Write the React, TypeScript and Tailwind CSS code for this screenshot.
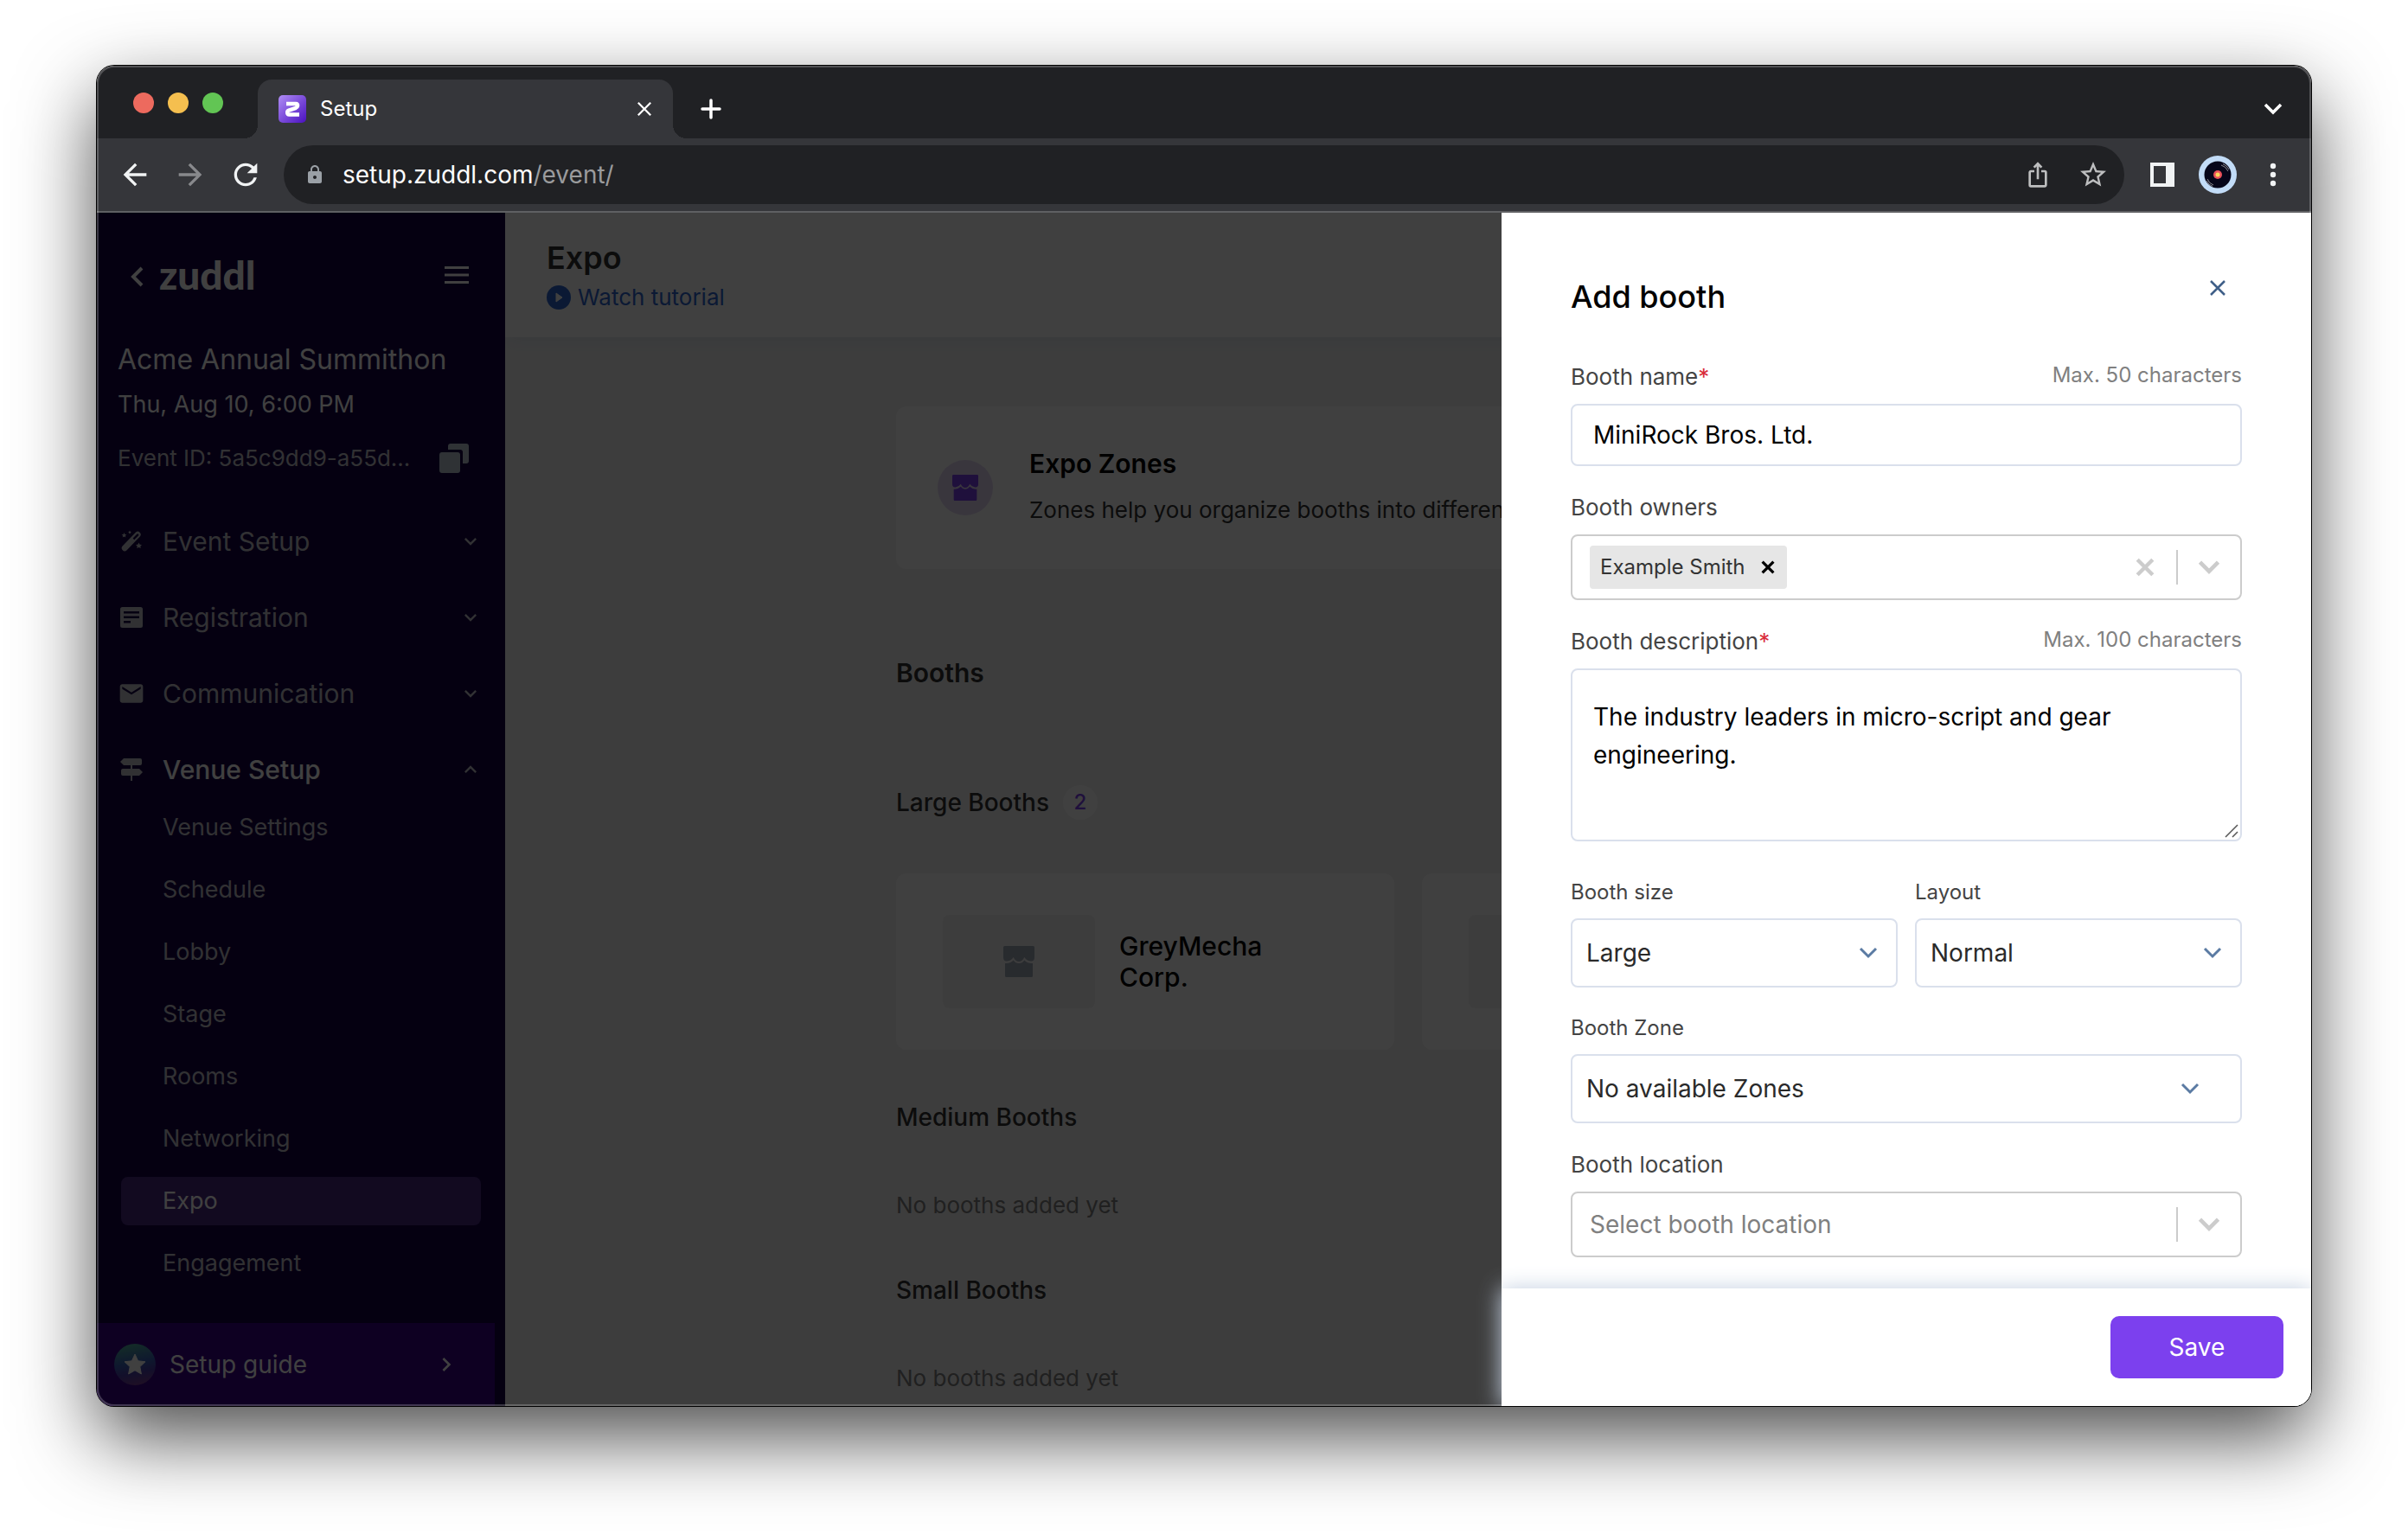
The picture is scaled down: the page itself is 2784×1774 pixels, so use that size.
import React from "react";
import {
  MdArrowBack,
  MdArrowForward,
  MdEmail,
  MdIosShare,
  MdKeyboardArrowDown,
  MdKeyboardArrowRight,
  MdKeyboardArrowUp,
  MdLock,
  MdRefresh,
  MdStarBorder,
} from "react-icons/md";

const venueLinks = ["Venue Settings", "Schedule", "Lobby", "Stage", "Rooms", "Networking", "Expo", "Engagement"];

function WandIcon() {
  return (
    <svg viewBox="0 0 26 26" className="size-[26px]" fill="currentColor" aria-hidden="true">
      <path
        fillRule="evenodd"
        d="M18 2.6a3.4 3.4 0 0 1 4.8 4.8L7.4 23.4a3.4 3.4 0 0 1-4.8-4.8L18 2.6Zm1.2 2.2-4.6 4.8 1.6 1.6 4.8-4.6a1.2 1.2 0 0 0-1.8-1.8Z"
      />
      <path d="m4.5 3 .9 1.9 2 .3-1.5 1.4.4 2-1.8-1-1.8 1 .4-2-1.5-1.4 2-.3L4.5 3ZM11 .5l.6 1.3 1.3.2-1 .9.3 1.3L11 3.6l-1.2.6.3-1.3-1-.9 1.3-.2L11 .5ZM21.500 14.500l1.100 2.200 2.400.3-1.700 1.700.4 2.400-2.200-1.200-2.200 1.200.4-2.400-1.700-1.700 2.400-.3 1.100-2.200Z" />
    </svg>
  );
}

function FormIcon() {
  return (
    <svg viewBox="0 0 26 24" className="w-[26px] h-6" fill="currentColor" aria-hidden="true">
      <path
        fillRule="evenodd"
        d="M2.500 0h21A2.500 2.500 0 0 1 26 2.500v19a2.500 2.500 0 0 1-2.500 2.500h-21A2.500 2.500 0 0 1 0 21.500v-19A2.500 2.500 0 0 1 2.500 0ZM4 5v2.500h18V5H4Zm0 5.500V13h18v-2.500H4ZM4 16v2.500h8V16H4Z"
      />
    </svg>
  );
}

function SignpostIcon() {
  return (
    <svg viewBox="0 0 26 26" className="size-[26px]" fill="currentColor" aria-hidden="true">
      <path d="M4 0h19a2 2 0 0 1 2 2v4a2 2 0 0 1-2 2H4L0 4l4-4ZM3 12h19l4 4-4 4H3a2 2 0 0 1-2-2v-4a2 2 0 0 1 2-2ZM12 8h2v4h-2zM12 20h2v6h-2z" />
    </svg>
  );
}

function StoreIcon({ className }: { className: string }) {
  return (
    <svg viewBox="0 0 36 36" className={className} fill="currentColor" aria-hidden="true">
      <path d="M0 1.500Q0 0 1.500 0h33Q36 0 36 1.500V13q0 5-4.500 4.500Q27 17 24.300 13 22 18 18 18t-6.300-5Q9 17 4.500 17.500 0 18 0 13Z" />
      <path d="M2 20q6 .5 9.700-3.500Q14 20 18 20t6.300-3.500Q28 20.500 34 20v14.500q0 1.500-1.500 1.500h-29Q2 36 2 34.500Z" />
    </svg>
  );
}

function Chevron({ className }: { className: string }) {
  return (
    <svg viewBox="0 0 24 24" className={className} fill="none" stroke="currentColor" aria-hidden="true">
      <path d="m3 7 9 9 9-9" />
    </svg>
  );
}

function Cross({ className }: { className: string }) {
  return (
    <svg viewBox="0 0 20 20" className={className} fill="none" stroke="currentColor" aria-hidden="true">
      <path d="m2 2 16 16M18 2 2 18" />
    </svg>
  );
}

function BrowserBar() {
  return (
    <header className="text-white">
      <div className="flex h-[84px] items-end bg-[#202124]">
        <div className="mb-[29px] ml-[42px] flex gap-4">
          <span className="size-6 rounded-full bg-[#ed6a5e]" />
          <span className="size-6 rounded-full bg-[#f5bf4f]" />
          <span className="size-6 rounded-full bg-[#62c554]" />
        </div>
        <div className="ml-6 size-4 bg-[radial-gradient(circle_at_0_0,#202124_16px,#35363a_16px)]" />
        <div className="flex h-[68px] w-[480px] items-center rounded-t-2xl bg-[#35363a] px-6">
          <svg viewBox="0 0 32 32" className="size-8" aria-hidden="true">
            <defs>
              <linearGradient id="mark" x1="0" y1="0" x2="1" y2="1">
                <stop offset="0" stopColor="#b08df5" />
                <stop offset="1" stopColor="#4a10c0" />
              </linearGradient>
            </defs>
            <rect width="32" height="32" rx="5" fill="url(#mark)" />
            <path d="M9 10h11q2.500 0 2 2.500-.3 1.500-2 2.300l-8 2.700q-1.800.8-1.800 2.500 0 2.500 2.300 2.500H24" fill="none" stroke="#fff" strokeWidth="4.500" />
          </svg>
          <span className="ml-4 flex-1 text-[24px] leading-8">Setup</span>
          <button aria-label="Close tab">
            <Cross className="size-[18px] stroke-[2.500]" />
          </button>
        </div>
        <div className="size-4 bg-[radial-gradient(circle_at_100%_0,#202124_16px,#35363a_16px)]" />
        <button aria-label="New tab" className="mb-[22px] ml-4">
          <svg viewBox="0 0 24 24" className="size-6" stroke="#fff" strokeWidth="3.500" strokeLinecap="round">
            <path d="M12 2v20M2 12h20" />
          </svg>
        </button>
        <button aria-label="Search tabs" className="mr-8 mb-[22px] ml-auto">
          <Chevron className="size-6 stroke-[3.500]" />
        </button>
      </div>

      <div className="flex h-[86px] items-center border-b-2 border-[#5f6063] bg-[#35363a] pr-8 pl-6">
        <div className="flex w-48 gap-6 text-[#f1f3f4]">
          <button aria-label="Back">
            <MdArrowBack className="size-10" />
          </button>
          <button aria-label="Forward" className="text-[#88898c]">
            <MdArrowForward className="size-10" />
          </button>
          <button aria-label="Reload">
            <MdRefresh className="size-10" />
          </button>
        </div>
        <div className="flex h-[68px] flex-1 items-center rounded-full bg-[#202124] pr-[18px] pl-6">
          <MdLock className="size-6 text-[#9aa0a6]" />
          <div role="textbox" aria-label="Address" className="ml-5 flex-1 text-[28px] leading-9">
            setup.zuddl.com<span className="text-[#9a9b9d]">/event/</span>
          </div>
          <div className="flex gap-7 text-[#bdbebf]">
            <button aria-label="Share">
              <MdIosShare className="size-9 p-[2px]" />
            </button>
            <button aria-label="Bookmark">
              <MdStarBorder className="size-9" />
            </button>
          </div>
        </div>
        <button aria-label="Side panel" className="ml-[30px]">
          <svg viewBox="0 0 28 28" className="size-7">
            <path fill="#f1f3f4" fillRule="evenodd" d="M0 0h28v28H0zM4 4v20h14V4z" />
          </svg>
        </button>
        <button aria-label="Profile" className="ml-7">
          <svg viewBox="0 0 44 44" className="size-11">
            <circle cx="22" cy="22" r="22" fill="#c2dcf7" />
            <circle cx="22" cy="22" r="15.500" fill="#06061a" />
            <path d="M26 11a12 12 0 0 1 8 7M28 9.500a13 13 0 0 1 7 6.500M10 27a12 12 0 0 0 7 7M9 29a13 13 0 0 0 7 6.500" stroke="#8b8b90" fill="none" />
            <circle cx="22" cy="22" r="5" fill="#e8505b" />
            <circle cx="22" cy="22" r="2.500" fill="#f9d65c" />
          </svg>
        </button>
        <button aria-label="Menu" className="ml-[30px]">
          <svg viewBox="0 0 24 28" className="h-7 w-6" fill="#f1f3f4">
            <circle cx="12" cy="4" r="3.200" />
            <circle cx="12" cy="14" r="3.200" />
            <circle cx="12" cy="24" r="3.200" />
          </svg>
        </button>
      </div>
    </header>
  );
}

function NavGroup({ icon, label, open }: { icon: React.ReactNode; label: string; open?: boolean }) {
  return (
    <button className="flex h-14 w-full items-center pr-[26px] pl-[27px] text-left text-[#c4c4cc]">
      <span className="flex w-[26px] justify-center">{icon}</span>
      <span className={open ? "ml-[23px] flex-1 text-[30px] leading-9 font-medium text-white" : "ml-[23px] flex-1 text-[30px] leading-9"}>{label}</span>
      {open ? <MdKeyboardArrowUp className="size-7" /> : <MdKeyboardArrowDown className="size-7" />}
    </button>
  );
}

function Sidebar() {
  return (
    <aside className="flex w-[472px] shrink-0 flex-col bg-[#140044] pt-11 text-white">
      <div className="flex h-14 items-center pr-[42px] pl-[38px]">
        <a href="#" className="flex items-center" aria-label="zuddl, back to events">
          <svg viewBox="0 0 16 24" className="mt-1 h-6 w-4" fill="none" stroke="#fff" strokeWidth="4">
            <path d="M14 2 4 12l10 10" />
          </svg>
          <span className="ml-[18px] font-[Lato] text-[46px] leading-[52px] font-black">zuddl</span>
        </a>
        <button aria-label="Collapse menu" className="ml-auto">
          <svg viewBox="0 0 28 20" className="h-5 w-7" fill="#fff">
            <path d="M0 0h28v3H0zM0 8.500h28v3H0zM0 17h28v3H0z" />
          </svg>
        </button>
      </div>

      <div className="mt-[50px] pr-[42px] pl-6">
        <h2 className="text-[32px] leading-10">Acme Annual Summithon</h2>
        <p className="mt-[14px] text-[27px] leading-9">Thu, Aug 10, 6:00 PM</p>
        <div className="mt-[26px] flex items-center justify-between text-[26px] leading-9 text-[#c4c4cc]">
          <p>Event ID: 5a5c9dd9-a55d...</p>
          <button aria-label="Copy event ID">
            <svg viewBox="0 0 34 34" className="size-[34px]" fill="#bcc8d4">
              <rect y="10" width="24" height="24" rx="3" />
              <path d="M13 0h18q3 0 3 3v17q0 3-3 3h-4V10q0-3-3-3H10V3q0-3 3-3Z" />
            </svg>
          </button>
        </div>
      </div>

      <nav className="mt-[50px]">
        <div className="flex flex-col gap-8">
          <NavGroup icon={<WandIcon />} label="Event Setup" />
          <NavGroup icon={<FormIcon />} label="Registration" />
          <NavGroup icon={<MdEmail className="size-8 shrink-0" />} label="Communication" />
          <NavGroup icon={<SignpostIcon />} label="Venue Setup" open />
        </div>
        <ul className="mt-[11px] mr-7 ml-7 flex flex-col gap-4 text-[27px] leading-[56px]">
          {venueLinks.map((link) => (
            <li key={link}>
              <a
                href="#"
                className={link === "Expo" ? "block rounded-lg bg-[#482880] pl-12" : "block pl-12 text-[#c4c4cc]"}
              >
                {link}
              </a>
            </li>
          ))}
        </ul>
      </nav>

      <button className="mt-auto mr-3 flex h-24 items-center bg-[#380088] pr-10 pl-5 text-left">
        <svg viewBox="0 0 48 48" className="size-12" aria-hidden="true">
          <defs>
            <linearGradient id="guide" x1="0.400" y1="0" x2="0.600" y2="1">
              <stop offset="0" stopColor="#4fae9c" />
              <stop offset="0.450" stopColor="#3a62b8" />
              <stop offset="0.700" stopColor="#4a3ca8" />
              <stop offset="1" stopColor="#7a4090" />
            </linearGradient>
          </defs>
          <circle cx="24" cy="24" r="24" fill="url(#guide)" />
          <path
            d="m24 12 3.600 7.800 8.400 1-6.200 5.800 1.600 8.400-7.400-4.200-7.400 4.200 1.600-8.400-6.200-5.800 8.400-1Z"
            fill="#fff"
            stroke="#fff"
            strokeLinejoin="round"
          />
        </svg>
        <span className="ml-4 flex-1 text-[28px] leading-9">Setup guide</span>
        <MdKeyboardArrowRight className="size-8" />
      </button>
    </aside>
  );
}

function BoothCard({ name }: { name?: string }) {
  return (
    <div className="flex h-[204px] items-center gap-7 rounded-xl bg-white px-[54px]">
      <div className="flex h-[108px] w-44 shrink-0 items-center justify-center rounded-lg bg-[#f2f2f2]">
        <StoreIcon className="size-9 text-[#a0aab8]" />
      </div>
      {name && <h4 className="max-w-[200px] text-[30px] leading-9 font-medium text-black">{name}</h4>}
    </div>
  );
}

function ExpoPage() {
  return (
    <main className="flex flex-1 flex-col overflow-hidden bg-[#f3f3f3] text-[#333333]">
      <div className="h-36 bg-white px-12 pt-[30px] shadow-[0_4px_20px_#dfe6ee]">
        <h1 className="text-[36px] leading-[44px] font-semibold">Expo</h1>
        <a href="#" className="mt-[6px] flex w-fit items-center gap-2 text-[26px] leading-9 text-[#2f66d0]">
          <svg viewBox="0 0 28 28" className="size-7" aria-hidden="true">
            <circle cx="14" cy="14" r="14" fill="currentColor" />
            <path d="M11 9v10l7-5Z" fill="#fff" stroke="#fff" strokeLinejoin="round" />
          </svg>
          Watch tutorial
        </a>
      </div>

      <div className="mx-auto w-full max-w-[1184px] pt-20">
        <div className="flex items-center gap-[42px] rounded-xl bg-white px-12 py-[50px]">
          <div className="flex size-16 items-center justify-center rounded-full bg-[#e4d8f4]">
            <StoreIcon className="size-[30px] text-[#7b40ed]" />
          </div>
          <div>
            <h3 className="text-[30px] leading-8 font-semibold text-black">Expo Zones</h3>
            <p className="mt-5 text-[26px] leading-9">Zones help you organize booths into different</p>
          </div>
        </div>

        <h2 className="mt-[100px] text-[30px] leading-10 font-semibold">Booths</h2>

        <div className="mt-[110px] flex items-center gap-4">
          <h3 className="text-[28px] leading-10 font-medium">Large Booths</h3>
          <span className="flex size-10 items-center justify-center rounded-full bg-white text-[24px] font-medium text-[#7b40ed]">2</span>
        </div>
        <div className="mt-[62px] grid grid-cols-2 gap-8">
          <BoothCard name="GreyMecha Corp." />
          <BoothCard />
        </div>

        <h3 className="mt-[58px] text-[28px] leading-10 font-medium">Medium Booths</h3>
        <p className="mt-[62px] text-[26px] leading-10 text-[#808080]">No booths added yet</p>
        <h3 className="mt-[58px] text-[28px] leading-10 font-medium">Small Booths</h3>
        <p className="mt-[62px] text-[26px] leading-10 text-[#808080]">No booths added yet</p>
      </div>
    </main>
  );
}

function SelectField({ id, label, options, wide }: { id: string; label: string; options: string[]; wide?: boolean }) {
  return (
    <div>
      <label htmlFor={id} className="block text-[24px] leading-[34px]">{label}</label>
      <div className="relative mt-[13px]">
        <select
          id={id}
          className="block h-20 w-full appearance-none rounded-lg border-2 border-[#dae0ec] bg-white px-4 text-[28px] text-[#2a2a2a]"
        >
          {options.map((o) => (
            <option key={o}>{o}</option>
          ))}
        </select>
        <Chevron
          className={
            wide
              ? "pointer-events-none absolute top-7 right-12 size-6 stroke-3 text-[#5b7ba3]"
              : "pointer-events-none absolute top-7 right-[22px] size-6 stroke-3 text-[#5b7ba3]"
          }
        />
      </div>
    </div>
  );
}

function AddBoothDrawer() {
  const [name, setName] = React.useState("MiniRock Bros. Ltd.");
  const [description, setDescription] = React.useState("The industry leaders in micro-script and gear engineering.");

  return (
    <section aria-label="Add booth" className="absolute inset-y-0 right-0 flex w-[936px] flex-col bg-white">
      <div className="flex-1 px-20 pt-[59px] text-[#444444]">
        <div className="flex items-start justify-between">
          <h2 className="mt-4 text-[36px] leading-[44px] font-medium text-black">Add booth</h2>
          <button aria-label="Close" className="flex size-14 items-center justify-center text-[#3f5f88]">
            <Cross className="size-5 stroke-[2.500]" />
          </button>
        </div>

        <div className="mt-[53px] flex items-start justify-between">
          <label htmlFor="name" className="text-[26px] leading-9">
            Booth name<span className="text-[#d92d3a]">*</span>
          </label>
          <span className="text-[24px] leading-8 text-[#808080]">Max. 50 characters</span>
        </div>
        <input
          id="name"
          value={name}
          onChange={(e) => setName(e.target.value)}
          className="mt-[13px] h-[72px] w-full rounded-lg border-2 border-[#dae0ec] px-6 text-[28px] text-black"
        />

        <label htmlFor="owners" className="mt-[30px] block text-[26px] leading-9">Booth owners</label>
        <div className="mt-[13px] flex h-[76px] items-center rounded-lg border-2 border-[#cccccc] pl-5">
          <span className="flex h-[50px] items-center rounded bg-[#e6e6e6] pr-[14px] pl-3 text-[24px] text-[#333333]">
            Example Smith
            <button aria-label="Remove Example Smith" className="ml-[18px] text-black">
              <Cross className="size-4 stroke-[4]" />
            </button>
          </span>
          <input id="owners" className="min-w-0 flex-1 px-2 text-[28px] outline-none" />
          <button aria-label="Clear owners" className="px-[25px] text-[#cccccc]">
            <Cross className="size-[22px] stroke-[4]" />
          </button>
          <span className="h-10 w-[2px] bg-[#cccccc]" />
          <button aria-label="Show owners" className="px-[22px] text-[#cccccc]">
            <Chevron className="size-7 stroke-[4]" />
          </button>
        </div>

        <div className="mt-[30px] flex items-start justify-between">
          <label htmlFor="description" className="text-[26px] leading-9">
            Booth description<span className="text-[#d92d3a]">*</span>
          </label>
          <span className="text-[24px] leading-8 text-[#808080]">Max. 100 characters</span>
        </div>
        <div className="relative mt-[13px]">
          <textarea
            id="description"
            value={description}
            onChange={(e) => setDescription(e.target.value)}
            className="block h-[200px] w-full resize-none rounded-lg border-2 border-[#dae0ec] px-6 py-8 text-[28px] leading-[44px] text-black"
          />
          <svg viewBox="0 0 16 16" className="absolute right-1 bottom-1 size-4" stroke="#555" strokeWidth="1.500" aria-hidden="true">
            <path d="M1 15 15 1M9 15l6-6" />
          </svg>
        </div>

        <div className="mt-[42px] grid grid-cols-2 gap-5">
          <SelectField id="size" label="Booth size" options={["Large", "Medium", "Small"]} />
          <SelectField id="layout" label="Layout" options={["Normal", "Wide"]} />
        </div>

        <div className="mt-[30px]">
          <SelectField id="zone" label="Booth Zone" options={["No available Zones"]} wide />
        </div>

        <label htmlFor="location" className="mt-[30px] block text-[26px] leading-9">Booth location</label>
        <div className="mt-[13px] flex h-[76px] items-center rounded-lg border-2 border-[#cccccc]">
          <input
            id="location"
            placeholder="Select booth location"
            className="min-w-0 flex-1 pl-5 text-[28px] outline-none placeholder:text-[#808080]"
          />
          <span className="h-10 w-[2px] bg-[#cccccc]" />
          <button aria-label="Show locations" className="px-[22px] text-[#cccccc]">
            <Chevron className="size-7 stroke-[4]" />
          </button>
        </div>
      </div>

      <div className="flex justify-end bg-white px-8 py-8 shadow-[0_0_24px_#c3cfe0]">
        <button className="h-[72px] w-[200px] rounded-[10px] bg-[#7c40ee] text-[28px] text-white">Save</button>
      </div>
    </section>
  );
}

export default function App() {
  return (
    <div className="flex min-h-screen flex-col bg-white px-28 pt-[76px] pb-[148px] font-[Inter,sans-serif]">
      <div className="relative flex flex-1 flex-col rounded-[20px] shadow-[0_0_0_1px_#000,0_36px_90px_rgba(0,0,0,0.7)]">
        <div className="flex flex-1 flex-col overflow-hidden rounded-[20px]">
          <BrowserBar />
          <div className="relative flex flex-1 overflow-hidden">
            <Sidebar />
            <ExpoPage />
            <div className="absolute inset-0 bg-black/75" />
            <AddBoothDrawer />
          </div>
        </div>
        {/* light rim along the window edge */}
        <div className="pointer-events-none absolute inset-0 rounded-[20px] shadow-[inset_0_0_0_2px_rgba(255,255,255,0.22)]" />
      </div>
    </div>
  );
}
